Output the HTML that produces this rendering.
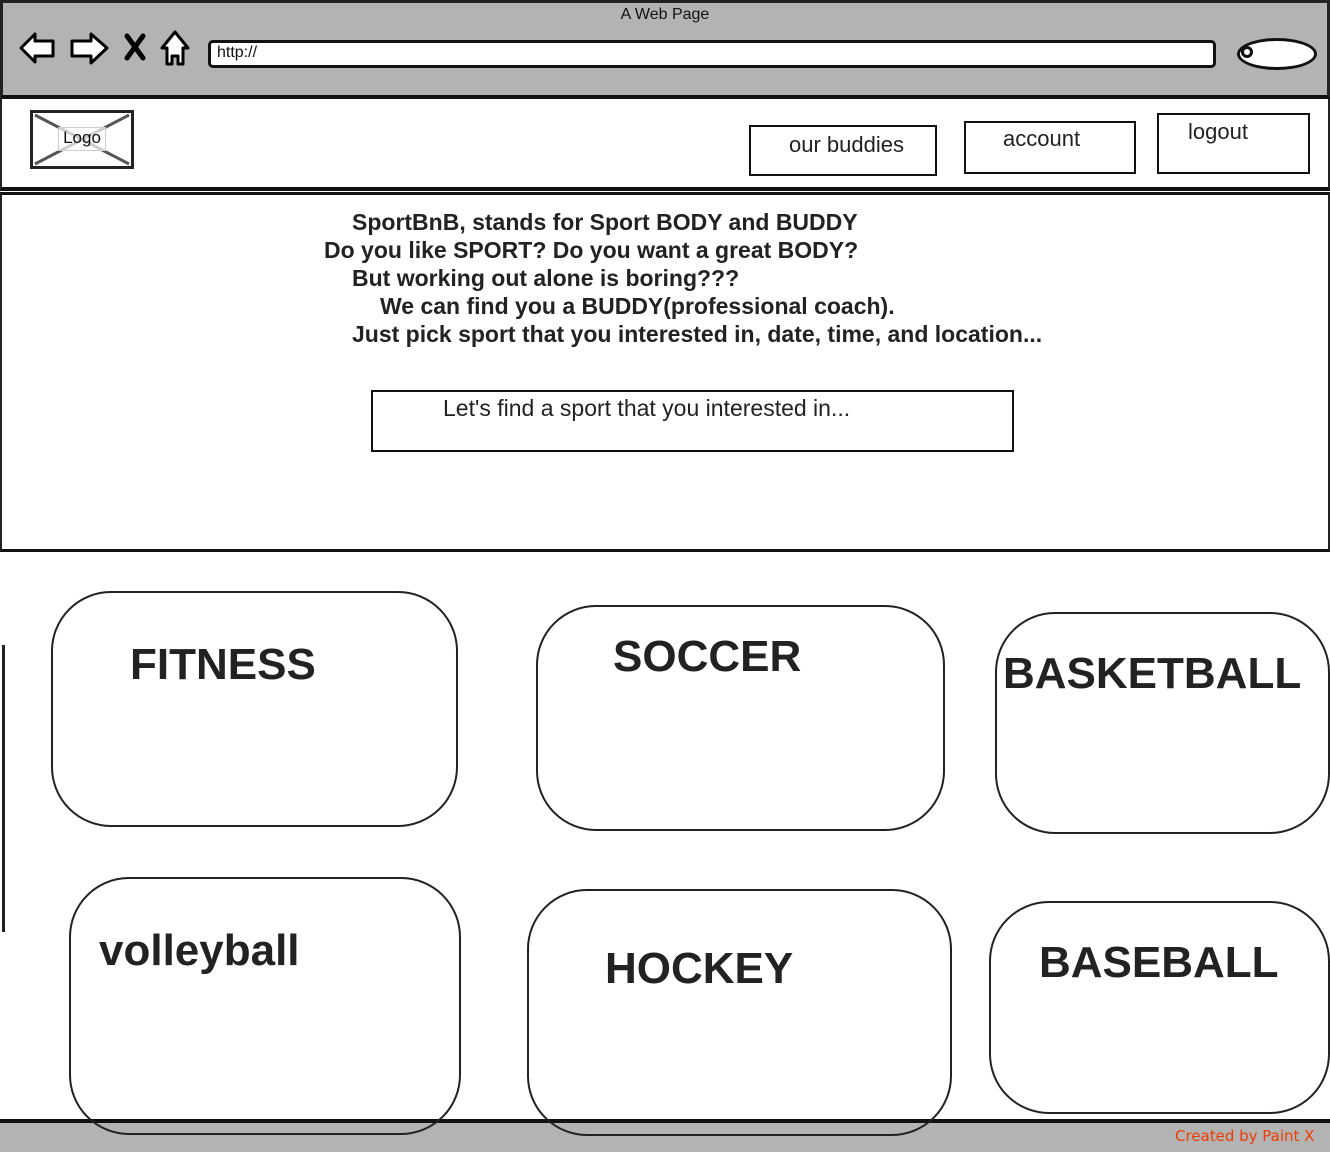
<!DOCTYPE html>
<html><head><meta charset="utf-8"><style>
*{margin:0;padding:0;box-sizing:border-box}
body{width:1330px;height:1152px;position:relative;background:#fff;font-family:"Liberation Sans",sans-serif;color:#222;overflow:hidden}
.a{position:absolute}
.btn{position:absolute;border:2px solid #111;background:#fff;font-size:22px;white-space:nowrap}
.card{position:absolute;border:2px solid #222;border-radius:60px;z-index:2}
.card span{position:absolute;font-weight:bold;font-size:44px;white-space:nowrap}
.t{position:absolute;font-weight:bold;font-size:23px;white-space:nowrap}
</style></head><body>
<div class="a" style="left:0;top:0;width:1330px;height:99px;background:#b3b3b3;border:3px solid #222;border-bottom:4px solid #111"></div>
<div class="a" style="left:0;top:6px;width:1330px;text-align:center;font-size:16px;color:#111">A Web Page</div>
<svg class="a" style="left:15px;top:28px" width="180" height="42" viewBox="0 0 180 42">
<path d="M6 20 L20 6 L20 13 L38 13 L38 28 L20 28 L20 34 Z" fill="#fff" stroke="#000" stroke-width="3" stroke-linejoin="round"/>
<path d="M92 20 L76 6 L76 13 L57 13 L57 28 L76 28 L76 35 Z" fill="#fff" stroke="#000" stroke-width="3" stroke-linejoin="round"/>
<path d="M112 8 L128 30 M128 8 L112 30" stroke="#000" stroke-width="5" stroke-linecap="round"/>
<path d="M160 4 L147 20 L152 20 L152 36 L157 36 L157 28 L163 28 L163 36 L168 36 L168 20 L173 20 Z" fill="#fff" stroke="#000" stroke-width="3" stroke-linejoin="round"/>
</svg>
<div class="a" style="left:208px;top:40px;width:1008px;height:28px;background:#fff;border:3px solid #111;border-radius:5px;font-size:16px;padding:1px 6px;color:#111">http://</div>
<div class="a" style="left:1237px;top:38px;width:80px;height:32px;background:#fff;border:3px solid #111;border-radius:50%"></div>
<div class="a" style="left:1241px;top:46px;width:12px;height:12px;border:3px solid #111;border-radius:50%"></div>
<div class="a" style="left:0;top:99px;width:1330px;height:92px;border-left:2px solid #222;border-right:2px solid #222;border-bottom:4px solid #111"></div>
<div class="a" style="left:30px;top:110px;width:104px;height:59px;border:3px solid #222;background:#fff"></div>
<svg class="a" style="left:33px;top:113px" width="98" height="53"><path d="M2 2 L96 51 M96 2 L2 51" stroke="#555" stroke-width="3"/></svg>
<div class="a" style="left:58px;top:127px;width:48px;height:24px;border:1px solid #ccc;background:rgba(255,255,255,0.7);font-size:17px;text-align:center;color:#111">Logo</div>
<div class="btn" style="left:749px;top:125px;width:188px;height:51px;padding:5px 0 0 38px">our buddies</div>
<div class="btn" style="left:964px;top:121px;width:172px;height:53px;padding:3px 0 0 37px">account</div>
<div class="btn" style="left:1157px;top:113px;width:153px;height:61px;padding:4px 0 0 29px">logout</div>
<div class="a" style="left:0;top:192px;width:1330px;height:360px;border:2px solid #222;border-top:3px solid #111;border-bottom:3px solid #111"></div>
<div class="t" style="left:352px;top:209px">SportBnB, stands for Sport BODY and BUDDY</div>
<div class="t" style="left:324px;top:237px">Do you like SPORT? Do you want a great BODY?</div>
<div class="t" style="left:352px;top:265px">But working out alone is boring???</div>
<div class="t" style="left:380px;top:293px">We can find you a BUDDY(professional coach).</div>
<div class="t" style="left:352px;top:321px">Just pick sport that you interested in, date, time, and location...</div>
<div class="a" style="left:371px;top:390px;width:643px;height:62px;border:2px solid #111"></div>
<div class="a" style="left:443px;top:395px;font-size:23px;white-space:nowrap">Let's find a sport that you interested in...</div>
<div class="a" style="left:2px;top:645px;width:3px;height:287px;background:#222"></div>
<div class="card" style="left:51px;top:591px;width:407px;height:236px"><span style="left:77px;top:47px">FITNESS</span></div>
<div class="card" style="left:536px;top:605px;width:409px;height:226px"><span style="left:75px;top:25px">SOCCER</span></div>
<div class="card" style="left:995px;top:612px;width:335px;height:222px"><span style="left:6px;top:35px">BASKETBALL</span></div>
<div class="card" style="left:69px;top:877px;width:392px;height:258px"><span style="left:28px;top:47px">volleyball</span></div>
<div class="card" style="left:527px;top:889px;width:425px;height:247px"><span style="left:76px;top:53px">HOCKEY</span></div>
<div class="card" style="left:989px;top:901px;width:341px;height:213px"><span style="left:48px;top:35px">BASEBALL</span></div>
<div class="a" style="left:0;top:1119px;width:1330px;height:33px;background:#b3b3b3;border-top:4px solid #111"></div>
<div class="a" style="left:1175px;top:1127px;font-family:'DejaVu Sans',sans-serif;font-size:15px;color:#f03c00;z-index:3">Created by Paint X</div>
</body></html>
